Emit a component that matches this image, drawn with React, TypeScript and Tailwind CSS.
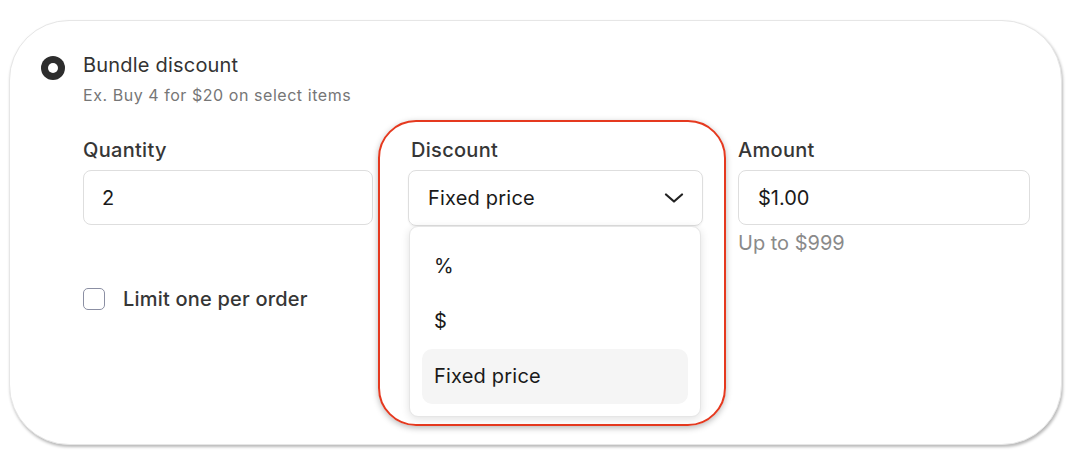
export default function App() {
  return (
    <div
      className="min-h-screen bg-white pl-[9px] pt-[20px] text-[#333333]"
      style={{ fontFamily: "Inter, 'Liberation Sans', sans-serif" }}
    >
      {/* Card */}
      <div className="w-[1053px] h-[425px] rounded-[60px] border border-[#e6e6e6] bg-white pl-[31px] pt-[30px] shadow-[1px_2px_3px_rgba(0,0,0,0.28)]">
        <div className="flex gap-[18px]">
          {/* Radio */}
          <div className="mt-[5px] flex h-6 w-6 shrink-0 items-center justify-center rounded-full bg-[#2d2d2d]">
            <div className="h-[10px] w-[10px] rounded-full bg-white" />
          </div>

          <div className="flex-1">
            <div className="text-[20px] leading-[28px] tracking-[0.2px]">Bundle discount</div>
            <div className="mt-[4px] text-[16px] leading-[24px] tracking-[0.55px] text-[#767676]">
              Ex. Buy 4 for $20 on select items
            </div>

            {/* Fields */}
            <div className="mt-[29px] grid grid-cols-[290px_295px_292px] gap-x-[35px]">
              {/* Quantity */}
              <div>
                <div className="text-[20px] font-medium leading-[28px] tracking-[0.3px] text-[#363636]">Quantity</div>
                <div className="mt-[6px] flex h-[55px] items-center rounded-[8px] border border-[#dedede] pl-[18px] text-[20px] text-[#1a1a1a]">
                  2
                </div>
              </div>

              {/* Discount */}
              <div className="relative">
                <div className="pl-[3px] text-[20px] font-medium leading-[28px] tracking-[0.3px] text-[#363636]">Discount</div>
                <div className="mt-[6px] flex h-[56px] items-center justify-between rounded-[8px] border border-[#dedede] pl-[19px] pr-[18px] text-[20px] tracking-[0.2px] text-[#1a1a1a] shadow-[0_1px_2px_rgba(0,0,0,0.06)]">
                  <span>Fixed price</span>
                  <svg width="20" height="10" viewBox="0 0 20 10" fill="none">
                    <path d="M2 1.5 L10 8.5 L18 1.5" stroke="#222" strokeWidth="2.2" strokeLinecap="round" strokeLinejoin="round" />
                  </svg>
                </div>

                {/* Open menu */}
                <div className="absolute left-[1px] top-[90px] w-[292px] rounded-[9px] border border-[#e6e6e6] bg-white p-[12px] shadow-[0_2px_8px_rgba(0,0,0,0.12)]">
                  <div className="flex h-[55px] items-center rounded-[10px] px-[12px] pb-[2px] text-[20px] text-[#1a1a1a]">%</div>
                  <div className="flex h-[55px] items-center rounded-[10px] px-[12px] pb-[2px] text-[20px] text-[#1a1a1a]">$</div>
                  <div className="flex h-[55px] items-center rounded-[10px] bg-[#f5f5f5] px-[12px] pb-[2px] text-[20px] tracking-[0.2px] text-[#1a1a1a]">
                    Fixed price
                  </div>
                </div>

                {/* Annotation highlight */}
                <div className="pointer-events-none absolute left-[-30px] top-[-16px] h-[306px] w-[348px] rounded-[38px] border-2 border-[#e5391f] shadow-[0_2px_6px_rgba(0,0,0,0.28)]" />
              </div>

              {/* Amount */}
              <div>
                <div className="text-[20px] font-medium leading-[28px] tracking-[0.3px] text-[#363636]">Amount</div>
                <div className="mt-[6px] flex h-[55px] items-center rounded-[8px] border border-[#dedede] pl-[19px] text-[20px] text-[#1a1a1a]">
                  $1.00
                </div>
                <div className="mt-[6px] text-[20px] leading-[24px] text-[#8a8a8a]">Up to $999</div>
              </div>
            </div>

            {/* Checkbox */}
            <div className="mt-[30px] flex h-[28px] items-center gap-[18px]">
              <div className="h-[22px] w-[22px] rounded-[5px] border-[1.5px] border-[#8b8fa3]" />
              <span className="text-[20px] font-medium tracking-[0.2px] text-[#363636]">Limit one per order</span>
            </div>
          </div>
        </div>
      </div>
    </div>
  );
}
